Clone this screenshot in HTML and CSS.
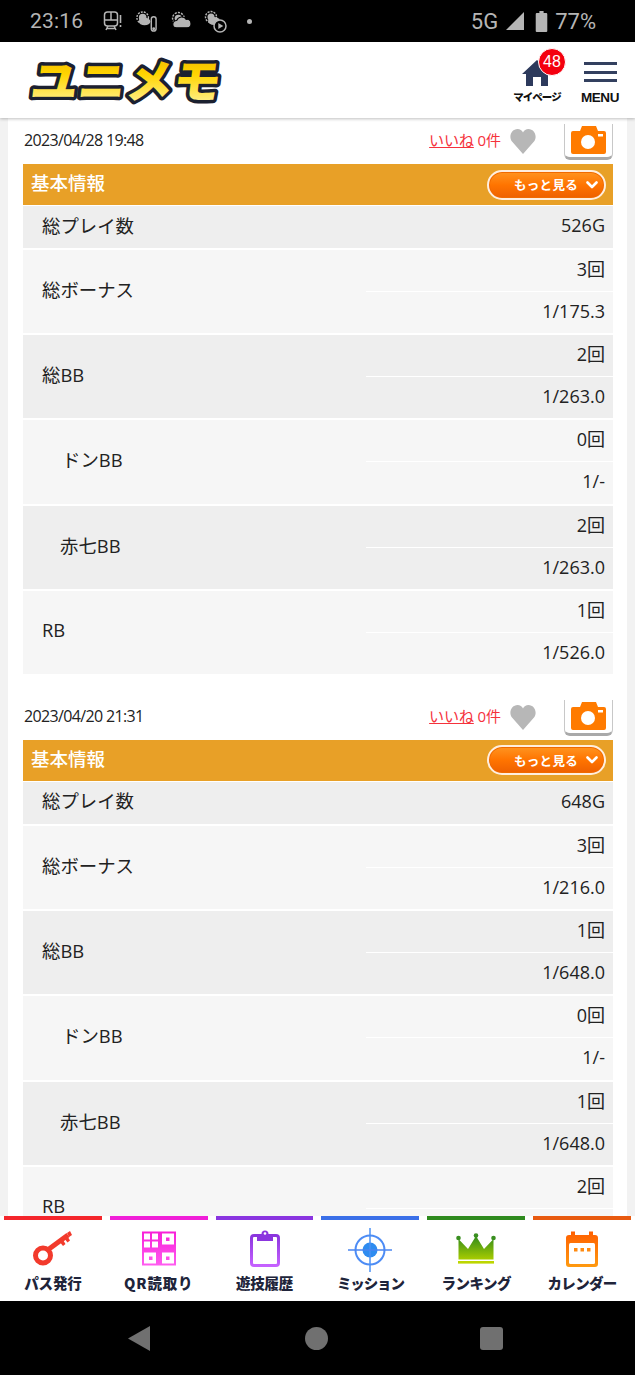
FILE: index.html
```html
<!DOCTYPE html>
<html lang="ja">
<head>
<meta charset="utf-8">
<title>ユニメモ</title>
<link rel="stylesheet" href="styles.css">
</head>
<body>
<div class="phone">
  <div class="status">
    <span class="time">23:16</span>
    <svg class="si si-train" viewBox="0 0 20 20"><g fill="none" stroke="#b5b5b5" stroke-width="1.5"><rect x="2.500" y="1" width="13" height="14" rx="3"/><path d="M2.500 9h13M9 1v8M4 19l2-4M14 19l-2-4M4.500 17.500h9"/></g><path d="M18.500 4v8M18.500 14v2" stroke="#b5b5b5" stroke-width="1.600"/></svg>
    <svg class="si si-w1" viewBox="0 0 24 24"><circle cx="8" cy="8" r="6" fill="none" stroke="#b5b5b5" stroke-width="1.500" stroke-dasharray="2 1.200"/><circle cx="8" cy="8" r="4" fill="#b5b5b5"/><ellipse cx="10" cy="12" rx="6" ry="4" fill="#b5b5b5"/><rect x="17" y="7" width="5" height="15" rx="2.500" fill="#000" stroke="#b5b5b5" stroke-width="1.500"/><circle cx="19.500" cy="19.500" r="1.500" fill="#b5b5b5"/></svg>
    <svg class="si si-w2" viewBox="0 0 20 20"><circle cx="7" cy="7" r="5.500" fill="none" stroke="#b5b5b5" stroke-width="1.400" stroke-dasharray="2 1.100"/><circle cx="7" cy="7" r="3.500" fill="#b5b5b5"/><path d="M5 16a3.500 3.500 0 0 1 .5-7 5 5 0 0 1 9-1 4 4 0 0 1 1 8z" fill="#b5b5b5" stroke="#000" stroke-width="1"/></svg>
    <svg class="si si-w3" viewBox="0 0 23 23"><circle cx="7" cy="7" r="5.500" fill="none" stroke="#b5b5b5" stroke-width="1.400" stroke-dasharray="2 1.100"/><circle cx="7" cy="7" r="3.500" fill="#b5b5b5"/><ellipse cx="10" cy="11" rx="6" ry="4" fill="#b5b5b5"/><circle cx="16" cy="16" r="6" fill="#000" stroke="#b5b5b5" stroke-width="1.500"/><path d="M14.300 13l5 3-5 3z" fill="#b5b5b5"/></svg>
    <span class="dot"></span>
    <span class="status-fill"></span>
    <span class="s-text">5G</span>
    <svg class="si si-signal" viewBox="0 0 20 20"><path d="M19 1v18H1z" fill="#b5b5b5"/></svg>
    <svg class="si si-batt" viewBox="0 0 12 20"><path d="M4 0h4v2h2.500a1 1 0 0 1 1 1v16a1 1 0 0 1-1 1h-9a1 1 0 0 1-1-1V3a1 1 0 0 1 1-1H4z" fill="#b5b5b5"/></svg>
    <span class="s-text s-pct">77%</span>
  </div>

  <header class="top">
    <svg class="logo" viewBox="0 0 204 76">
      <defs>
        <linearGradient id="lg" x1="0" y1="0" x2="0" y2="1">
          <stop offset="0" stop-color="#eba800"/>
          <stop offset=".45" stop-color="#ffd400"/>
          <stop offset="1" stop-color="#fff7b0"/>
        </linearGradient>
      </defs>
      <text class="logo-text" x="0" y="0" textLength="190" lengthAdjust="spacingAndGlyphs" transform="translate(4 56) skewX(-7)" fill="url(#lg)">ユニメモ</text>
    </svg>
    <div class="top-right">
      <div class="mypage">
        <svg class="home" viewBox="0 0 30 28"><path d="M15 1 30 15h-4v12h-7v-9h-8v9H4V15H0z" fill="#2d3a5c"/></svg>
        <span class="badge">48</span>
        <span class="mypage-label">マイページ</span>
      </div>
      <div class="menu">
        <div class="bars"><i></i><i></i><i></i></div>
        <span class="menu-label">MENU</span>
      </div>
    </div>
  </header>

  <main class="view">
    <div class="card">

      <section class="entry">
        <div class="entry-head">
          <span class="date">2023/04/28 19:48</span>
          <span class="like"><a class="like-link">いいね</a> 0件</span>
          <svg class="heart" viewBox="0 0 26 25"><path d="M13 25 2 12.500C-2 7 2 0 7.500 0 10 0 12 1.500 13 3.500 14 1.500 16 0 18.500 0 24 0 28 7 24 12.500z" fill="#b7b7b7"/></svg>
          <span class="cam"><svg viewBox="0 0 35 28"><path d="M0 7a2 2 0 0 1 2-2h7l2-5h14l2 5h6a2 2 0 0 1 2 2v19a2 2 0 0 1-2 2H2a2 2 0 0 1-2-2z" fill="#ff7b00"/><circle cx="17" cy="16" r="7" fill="#fff"/><rect x="27" y="8" width="5" height="2.500" fill="#fff"/></svg></span>
        </div>
        <div class="bar">
          <span class="bar-title">基本情報</span>
          <span class="more">もっと見る<svg viewBox="0 0 12 8"><path d="M1.500 1.500 6 6l4.500-4.500" fill="none" stroke="#fff" stroke-width="2.600" stroke-linecap="round" stroke-linejoin="round"/></svg></span>
        </div>
        <div class="row single dark"><div class="label">総プレイ数</div><div class="vals"><div class="val">526G</div></div></div>
        <div class="row light"><div class="label">総ボーナス</div><div class="vals"><div class="val">3回</div><div class="val">1/175.3</div></div></div>
        <div class="row dark"><div class="label">総BB</div><div class="vals"><div class="val">2回</div><div class="val">1/263.0</div></div></div>
        <div class="row light"><div class="label indent-a">ドンBB</div><div class="vals"><div class="val">0回</div><div class="val">1/-</div></div></div>
        <div class="row dark"><div class="label indent-b">赤七BB</div><div class="vals"><div class="val">2回</div><div class="val">1/263.0</div></div></div>
        <div class="row light"><div class="label">RB</div><div class="vals"><div class="val">1回</div><div class="val">1/526.0</div></div></div>
      </section>

      <section class="entry">
        <div class="entry-head">
          <span class="date">2023/04/20 21:31</span>
          <span class="like"><a class="like-link">いいね</a> 0件</span>
          <svg class="heart" viewBox="0 0 26 25"><path d="M13 25 2 12.500C-2 7 2 0 7.500 0 10 0 12 1.500 13 3.500 14 1.500 16 0 18.500 0 24 0 28 7 24 12.500z" fill="#b7b7b7"/></svg>
          <span class="cam"><svg viewBox="0 0 35 28"><path d="M0 7a2 2 0 0 1 2-2h7l2-5h14l2 5h6a2 2 0 0 1 2 2v19a2 2 0 0 1-2 2H2a2 2 0 0 1-2-2z" fill="#ff7b00"/><circle cx="17" cy="16" r="7" fill="#fff"/><rect x="27" y="8" width="5" height="2.500" fill="#fff"/></svg></span>
        </div>
        <div class="bar">
          <span class="bar-title">基本情報</span>
          <span class="more">もっと見る<svg viewBox="0 0 12 8"><path d="M1.500 1.500 6 6l4.500-4.500" fill="none" stroke="#fff" stroke-width="2.600" stroke-linecap="round" stroke-linejoin="round"/></svg></span>
        </div>
        <div class="row single dark"><div class="label">総プレイ数</div><div class="vals"><div class="val">648G</div></div></div>
        <div class="row light"><div class="label">総ボーナス</div><div class="vals"><div class="val">3回</div><div class="val">1/216.0</div></div></div>
        <div class="row dark"><div class="label">総BB</div><div class="vals"><div class="val">1回</div><div class="val">1/648.0</div></div></div>
        <div class="row light"><div class="label indent-a">ドンBB</div><div class="vals"><div class="val">0回</div><div class="val">1/-</div></div></div>
        <div class="row dark"><div class="label indent-b">赤七BB</div><div class="vals"><div class="val">1回</div><div class="val">1/648.0</div></div></div>
        <div class="row light"><div class="label">RB</div><div class="vals"><div class="val">2回</div><div class="val"></div></div></div>
      </section>

    </div>
  </main>

  <nav class="tabs">
    <a class="tab t-red">
      <svg viewBox="0 0 44 44"><g fill="none" stroke="#f23a2c"><circle cx="12" cy="27.500" r="7.500" stroke-width="5"/><path d="M18 21 37 7" stroke-width="5"/></g><path d="M28 13l4 5 2.500-2-3-5zM33 10l3.500 4.500 2.500-2-3-5zM36 5l3-2 2 4-3 2z" fill="#f23a2c"/></svg>
      <span>パス発行</span>
    </a>
    <a class="tab t-pink">
      <svg viewBox="0 0 44 44">
        <defs><linearGradient id="gq" x1="0" y1="0" x2="0" y2="1"><stop offset="0" stop-color="#f81fd8"/><stop offset="1" stop-color="#ff5cf0"/></linearGradient></defs>
        <rect x="5" y="3.500" width="34" height="34" fill="url(#gq)"/>
        <g fill="#fff"><rect x="7" y="5.500" width="6" height="6"/><rect x="15" y="5.500" width="6" height="6"/><rect x="7" y="13.500" width="6" height="6"/><rect x="15" y="13.500" width="6" height="6"/><path d="M25 5.500h12v11H25zM29 9.500v3.500h3.500V9.500z" fill-rule="evenodd"/><path d="M7 24.500h12v11H7zM12 28.500v3.500h3.500v-3.500z" fill-rule="evenodd"/><path d="M25 24.500h12v11H25zM29 28.500v3.500h3.500v-3.500z" fill-rule="evenodd"/></g>
      </svg>
      <span>QR読取り</span>
    </a>
    <a class="tab t-purple">
      <svg viewBox="0 0 44 44">
        <defs><linearGradient id="gc" x1="0" y1="0" x2="0" y2="1"><stop offset="0" stop-color="#8b35de"/><stop offset="1" stop-color="#c561ff"/></linearGradient></defs>
        <rect x="8.500" y="7.500" width="27" height="30" rx="2.500" fill="none" stroke="url(#gc)" stroke-width="3"/>
        <path d="M14 6h4.500a3.500 3.500 0 0 1 7 0H30v7H14z" fill="#8b35de"/>
        <circle cx="22" cy="5.500" r="1.300" fill="#fff"/>
      </svg>
      <span>遊技履歴</span>
    </a>
    <a class="tab t-blue">
      <svg viewBox="0 0 44 44">
        <circle cx="22" cy="22" r="14.500" fill="none" stroke="#4d8cf5" stroke-width="2"/>
        <circle cx="22" cy="22" r="7.500" fill="#2f8cf0"/>
        <path d="M22 0v44" stroke="#4a90f5" stroke-width="1.500"/>
        <path d="M0 22h44" stroke="#4a86f0" stroke-width="1.500"/>
      </svg>
      <span>ミッション</span>
    </a>
    <a class="tab t-green">
      <svg viewBox="0 0 44 44">
        <defs><linearGradient id="gk" x1="0" y1="0" x2="0" y2="1"><stop offset="0" stop-color="#2f8a1c"/><stop offset="1" stop-color="#a8cc00"/></linearGradient></defs>
        <path d="M4.500 11 14 21 22 8 30 21 39.500 11V31.500H4.500z" fill="url(#gk)"/>
        <g fill="#3a8f20"><circle cx="4.500" cy="10" r="2.300"/><circle cx="22" cy="7.500" r="2.300"/><circle cx="39.500" cy="10" r="2.300"/></g>
        <rect x="4" y="33" width="36" height="2.600" fill="#bdd600"/>
      </svg>
      <span>ランキング</span>
    </a>
    <a class="tab t-orange">
      <svg viewBox="0 0 44 44">
        <defs><linearGradient id="go" x1="0" y1="0" x2="0" y2="1"><stop offset="0" stop-color="#ff5f00"/><stop offset="1" stop-color="#ff9a10"/></linearGradient></defs>
        <path d="M6 10a3 3 0 0 1 3-3h2V3.500h4V7h14V3.500h4V7h2a3 3 0 0 1 3 3v26a3 3 0 0 1-3 3H9a3 3 0 0 1-3-3z" fill="url(#go)"/>
        <rect x="9" y="15" width="26" height="21" rx="1.500" fill="#fff"/>
        <g fill="#ff8a10"><rect x="14" y="20" width="3.500" height="3.500"/><rect x="20.500" y="20" width="3.500" height="3.500"/><rect x="27" y="20" width="3.500" height="3.500"/></g>
      </svg>
      <span>カレンダー</span>
    </a>
  </nav>

  <div class="sysnav">
    <svg class="nav-back" viewBox="0 0 22 25"><path d="M22 0v25L0 12.500z" fill="#707070"/></svg>
    <span class="nav-home"></span>
    <span class="nav-recent"></span>
  </div>
</div>
</body>
</html>
```
FILE: styles.css
```css
* { box-sizing: border-box; }
html, body { margin: 0; padding: 0; }
body {
  font-family: "Open Sans", "Noto Sans CJK JP", sans-serif;
  color: #222;
  background: #000;
}
.phone {
  width: 635px;
  height: 1375px;
  display: flex;
  flex-direction: column;
  overflow: hidden;
}

/* Android status bar */
.status {
  height: 42px;
  flex: none;
  background: #000;
  display: flex;
  align-items: center;
  padding: 0 39px 0 30px;
  color: #b5b5b5;
  font-family: Roboto, sans-serif;
}
.time { font-size: 21px; letter-spacing: .2px; width: 72px; }
.si { display: block; flex: none; }
.si-train { width: 20px; height: 20px; }
.si-w1 { width: 23px; height: 23px; margin-left: 13px; }
.si-w2 { width: 21px; height: 21px; margin-left: 13px; }
.si-w3 { width: 23px; height: 23px; margin-left: 12px; }
.dot { width: 5px; height: 5px; border-radius: 50%; background: #b5b5b5; margin-left: 20px; }
.status-fill { flex: 1; }
.s-text { font-size: 22px; }
.si-signal { width: 20px; height: 20px; margin-left: 7px; }
.si-batt { width: 13px; height: 21px; margin-left: 10px; }
.s-pct { margin-left: 7px; }

/* Site header */
.top {
  height: 76px;
  flex: none;
  background: #fff;
  display: flex;
  align-items: center;
  justify-content: space-between;
  padding: 0 16px 0 25px;
  box-shadow: 0 1px 3px rgba(0,0,0,.25);
  position: relative;
  z-index: 2;
}
.logo { width: 204px; height: 76px; display: block; }
.logo-text {
  font-family: "Noto Sans CJK JP", sans-serif;
  font-size: 46px;
  font-weight: 900;
  stroke: #1b2030;
  stroke-width: 7px;
  stroke-linejoin: round;
  paint-order: stroke;
}
.top-right { display: flex; align-items: flex-start; gap: 21px; align-self: stretch; }
.mypage {
  position: relative;
  width: 46px;
  display: flex;
  flex-direction: column;
  align-items: center;
  padding-top: 17px;
}
.home { width: 30px; height: 28px; display: block; margin-right: 1px; }
.badge {
  position: absolute;
  top: 6px;
  left: 24px;
  width: 28px;
  height: 28px;
  border-radius: 50%;
  background: #f4000f;
  border: 1px solid #fff;
  color: #fff;
  font-family: "Liberation Sans", sans-serif;
  font-size: 16px;
  line-height: 26px;
  text-align: center;
}
.mypage-label {
  font-size: 10.500px;
  font-weight: 900;
  line-height: 14px;
  margin-top: 3px;
  white-space: nowrap;
  color: #111;
  font-family: "Noto Sans CJK JP", sans-serif;
  letter-spacing: -1px;
}
.menu { width: 38px; padding-top: 20px; display: flex; flex-direction: column; align-items: center; }
.bars { width: 33px; display: flex; flex-direction: column; gap: 5.500px; }
.bars i { display: block; height: 3px; background: #33405f; }
.menu-label {
  font-family: "Liberation Sans", sans-serif;
  font-size: 13.500px;
  font-weight: 700;
  letter-spacing: -.4px;
  line-height: 16px;
  margin-top: 8px;
  color: #111;
}

/* Scroll view */
.view {
  flex: 1;
  min-height: 0;
  overflow: hidden;
  background: #f2f2f2;
  padding: 0 8px;
}
.card {
  width: 619px;
  background: #fff;
  padding: 6px 14px 0 15px;
}
.entry { margin-bottom: 26px; }
.entry-head {
  height: 36px;
  margin-bottom: 4px;
  display: flex;
  align-items: flex-start;
}
.date {
  flex: 1;
  font-size: 16px;
  line-height: 20px;
  padding: 0 0 0 1px;
  margin-top: 6px;
  letter-spacing: -.65px;
  color: #222;
}
.like {
  font-size: 15px;
  line-height: 20px;
  margin-top: 6px;
  color: #f5323c;
  font-family: "Open Sans", "Noto Sans CJK JP", sans-serif;
  letter-spacing: -.1px;
}
.like-link { text-decoration: underline; }
.heart { width: 26px; height: 25px; margin: 5px 28px 0 9px; flex: none; display: block; }
.cam {
  width: 49px;
  height: 36px;
  flex: none;
  background: #fff;
  border: 1px solid #c8c8c8;
  border-top: 0;
  border-bottom: 3px solid #a9a9a9;
  border-radius: 0 0 6px 6px;
  display: flex;
  justify-content: center;
  padding-top: 2px;
}
.cam svg { width: 35px; height: 28px; display: block; }

.bar {
  height: 41px;
  background: #e8a027;
  display: flex;
  align-items: center;
  justify-content: space-between;
  padding: 0 7px 0 8px;
}
.bar-title {
  color: #fff;
  font-size: 18.500px;
  font-weight: 500;
  font-family: "Noto Sans CJK JP", sans-serif;
  padding-bottom: 5px;
}
.more {
  width: 119px;
  height: 30px;
  border: 2px solid #ffeede;
  border-radius: 15px;
  background: linear-gradient(#ff9420, #ff7400 50%, #ee6000);
  box-shadow: inset 0 0 0 1px #f06a00;
  color: #fff;
  font-family: "Noto Sans CJK JP", sans-serif;
  font-size: 12.500px;
  font-weight: 700;
  display: flex;
  align-items: center;
  justify-content: flex-end;
  padding-right: 6px;
  gap: 8px;
  letter-spacing: .3px;
}
.more svg { width: 12px; height: 8px; display: block; }

.row { display: flex; margin-top: 2px; }
.row.single { margin-top: 1px; }
.dark { background: #eeeeee; }
.light { background: #f6f6f6; }
.label {
  width: 343px;
  flex: none;
  display: flex;
  align-items: center;
  padding: 0 0 5px 19px;
  font-size: 18.400px;
  color: #222;
  font-family: "Open Sans", "Noto Sans CJK JP", sans-serif;
}
.indent-a { padding-left: 39px; }
.indent-b { padding-left: 37px; }
.vals { flex: 1; }
.val {
  height: 41.100px;
  line-height: 39.500px;
  text-align: right;
  padding-right: 8px;
  font-size: 18px;
  color: #222;
}
.val + .val { height: 42.100px; border-top: 1px solid #fff; }
.single .val { height: 42px; }

/* Bottom tabs */
.tabs {
  height: 85px;
  flex: none;
  background: #fff;
  display: flex;
  position: relative;
  z-index: 2;
}
.tab {
  flex: 1 1 0;
  min-width: 0;
  margin: 0 4px;
  border-top: 4.500px solid;
  display: flex;
  flex-direction: column;
  align-items: center;
  padding-top: 7.500px;
}
.tab svg { width: 44px; height: 44px; display: block; flex: none; }
.tab span {
  font-family: "Noto Sans CJK JP", sans-serif;
  font-size: 14.500px;
  font-weight: 900;
  line-height: 20px;
  margin-top: 1.500px;
  color: #20243a;
  white-space: nowrap;
  letter-spacing: -.2px;
}
.t-red { border-color: #f4262c; }
.t-pink { border-color: #f01fd8; }
.t-pink span { letter-spacing: .85px; }
.t-purple { border-color: #8a35e0; }
.t-blue { border-color: #3a6fe8; }
.t-blue span { letter-spacing: -1.100px; }
.t-green { border-color: #2e8a1e; }
.t-green span { letter-spacing: -.5px; }
.t-orange { border-color: #e85a10; }
.t-orange span { letter-spacing: -.7px; }

/* System nav */
.sysnav {
  height: 74px;
  flex: none;
  background: #000;
  display: flex;
  align-items: center;
  padding-left: 128px;
}
.nav-back { width: 22px; height: 25px; display: block; }
.nav-home { width: 23px; height: 23px; border-radius: 50%; background: #707070; margin-left: 155px; }
.nav-recent { width: 23px; height: 23px; border-radius: 3px; background: #707070; margin-left: 152px; margin-top: 1px; }
```
